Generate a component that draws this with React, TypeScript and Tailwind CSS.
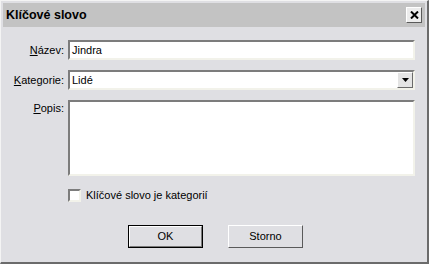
export default function App() {
  const font = { fontFamily: '"Liberation Sans", Arial, sans-serif' };
  return (
    <div className="w-[429px] h-[264px] bg-[#dfdfe3] text-black text-[11px] leading-none" style={font}>
      <div className="flex h-full w-full flex-col border-t border-l border-t-[#f4f4f4] border-l-[#f4f4f4] border-r-2 border-b-2 border-r-[#6b6b6b] border-b-[#6b6b6b]">
        {/* title bar */}
        <div className="mx-[2px] mt-[2px] flex h-[24px] items-center justify-between bg-[#c3c3c3] pl-[3px] pr-[3px]">
          <span className="text-[12.5px] font-bold">Klíčové slovo</span>
          <button className="flex h-[16px] w-[16px] items-center justify-center border border-t-white border-l-white border-r-[#5a5a5a] border-b-[#5a5a5a] bg-[#ececec]">
            <svg width="9" height="8" viewBox="0 0 9 8">
              <path d="M1 0.5 L8 7.5 M8 0.5 L1 7.5" stroke="#000" strokeWidth="2" />
            </svg>
          </button>
        </div>

        {/* form */}
        <div className="mt-[13px] grid grid-cols-[63px_347px] gap-x-[4px] gap-y-[10px]">
          <label className="self-center text-right">
            <u>N</u>ázev:
          </label>
          <div className="flex h-[20px] items-center border-2 border-t-[#7c7c7c] border-l-[#7c7c7c] border-r-[#f2f2ea] border-b-[#f2f2ea] bg-white pl-[2px]">
            Jindra
          </div>

          <label className="self-center text-right">
            <u>K</u>ategorie:
          </label>
          <div className="flex h-[20px] items-center justify-between border-2 border-t-[#7c7c7c] border-l-[#7c7c7c] border-r-[#f2f2ea] border-b-[#f2f2ea] bg-white pl-[2px]">
            <span>Lidé</span>
            <div className="flex h-[16px] w-[16px] items-center justify-center border border-t-white border-l-white border-r-[#6a6a6a] border-b-[#6a6a6a] bg-[#e4e4e4]">
              <svg width="7" height="4" viewBox="0 0 7 4">
                <path d="M0 0 H7 L3.5 4 Z" fill="#000" />
              </svg>
            </div>
          </div>

          <label className="mt-[3px] text-right">
            <u>P</u>opis:
          </label>
          <div className="h-[76px] border-2 border-t-[#7c7c7c] border-l-[#7c7c7c] border-r-[#f2f2ea] border-b-[#f2f2ea] bg-white" />
        </div>

        {/* checkbox */}
        <div className="mt-[13px] ml-[67px] flex items-center gap-[5px]">
          <div className="h-[13px] w-[13px] border-2 border-t-[#7c7c7c] border-l-[#7c7c7c] border-r-[#f2f2ea] border-b-[#f2f2ea] bg-white" />
          <span>Klíčové slovo je kategorií</span>
        </div>

        {/* buttons */}
        <div className="mt-[23px] ml-[127px] flex gap-[25px]">
          <button className="flex h-[23px] w-[75px] items-center justify-center border border-black bg-[#dfdfe3]">
            <span className="flex h-full w-full items-center justify-center border border-t-white border-l-white border-r-[#7a7a7a] border-b-[#7a7a7a]">OK</span>
          </button>
          <button className="flex h-[23px] w-[75px] items-center justify-center border border-t-white border-l-white border-r-[#5a5a5a] border-b-[#5a5a5a] bg-[#dfdfe3]">
            Storno
          </button>
        </div>
      </div>
    </div>
  );
}
